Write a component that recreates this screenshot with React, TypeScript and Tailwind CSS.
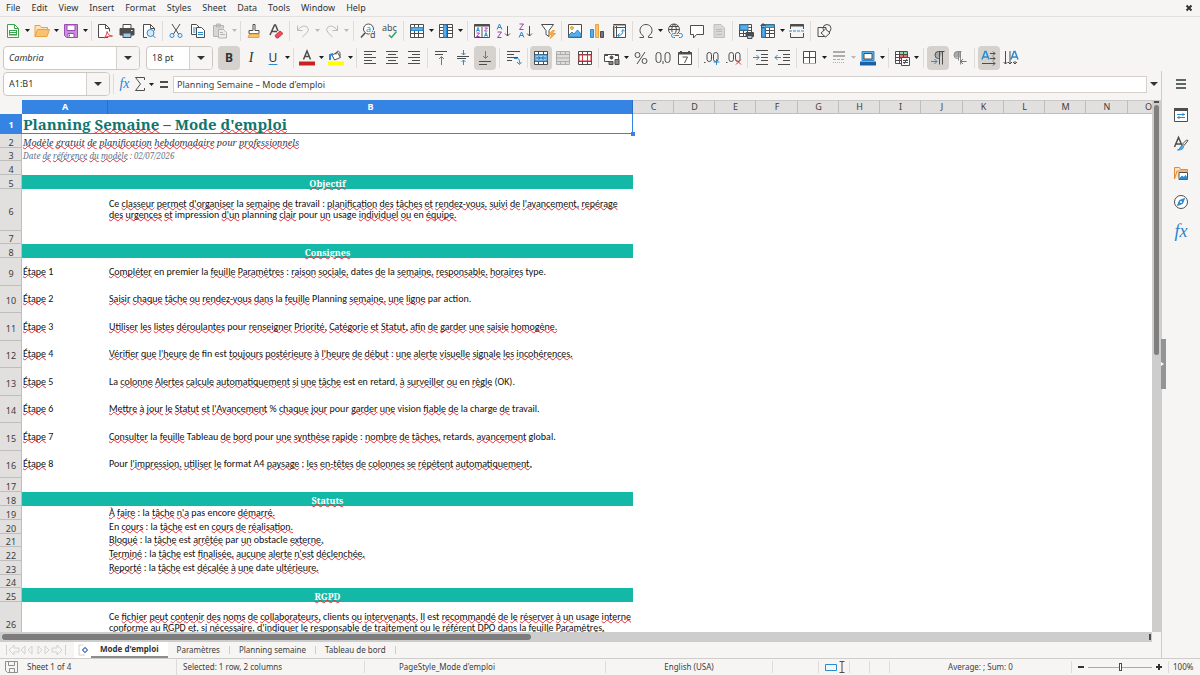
import { Fragment } from "react";
import type { ReactNode } from "react";
import clsx from "clsx";

const INK = "#4d4d4d";
const BLUE = "#2a8bd0";
const RED = "#d9363e";
const ORANGE = "#e8a33d";

const grid = (x: number, y: number, w: number, h: number) =>
  `M${x} ${y}h${w}v${h}h-${w}z M${x} ${y + 3}h${w} M${x} ${y + 6}h${w} M${x} ${y + 9}h${w} M${x + 4} ${y}v${h} M${x + 8} ${y}v${h}`;

const icons: Record<string, ReactNode> = {
  new: (
    <>
      <path d="M2.500 1.500h7l4 4v9h-11z" fill="#fff" stroke="#3fa34d" />
      <path d="M9.500 1.500v4h4" stroke="#3fa34d" />
      <path d="M4 7h8v5.500h-8z" fill="#3fa34d" stroke="none" />
      <path d="M5 8.500h6M5 10.500h6" stroke="#fff" />
    </>
  ),
  open: (
    <>
      <path d="M1 13.500v-11h5l1.500 2h6v3" fill="#fbe3bd" stroke={ORANGE} />
      <path d="M1 13.500l2.500-7h12l-2.500 7z" fill="#f9c270" stroke={ORANGE} />
    </>
  ),
  save: (
    <>
      <path d="M1.500 1.500h13v13h-11l-2-2z" fill="#c98fd8" stroke="#9b4db5" />
      <path d="M4 2h8v5.500h-8z" fill="#fff" stroke="#9b4db5" />
      <path d="M5 10.500h6v4h-6z" fill="#fff" stroke="#9b4db5" />
      <path d="M6.500 11.500v2" stroke="#9b4db5" />
    </>
  ),
  pdf: (
    <>
      <path d="M11 14.500h-9.500v-13h7l4 4v3" fill="#fff" stroke={INK} />
      <path d="M8.500 1.500v4h4" stroke={INK} />
      <path d="M7 15c2-2 3-4 3-6.500c1.500 4 3 4.500 5.500 4.500c-3 0-6 .5-8.500 2z" stroke={RED} />
    </>
  ),
  print: (
    <>
      <path d="M4 6v-4.500h8v4.500" fill="#fff" stroke={INK} />
      <path d="M1 5.500h14v6.500h-14z" fill={INK} stroke={INK} />
      <path d="M4 10h8v4.500h-8z" fill="#9cc9ee" stroke={INK} />
      <path d="M12 7.500h1.500" stroke="#fff" />
    </>
  ),
  preview: (
    <>
      <path d="M6 14.500h-3.500v-13h7l4 4v2" fill="#fff" stroke={INK} />
      <path d="M9.500 1.500v4h4" stroke={INK} />
      <circle cx="9.500" cy="10" r="3.500" fill="#d4eafa" stroke={BLUE} />
      <path d="M12 12.500l2.500 2.500" stroke={BLUE} />
    </>
  ),
  cut: (
    <>
      <path d="M4 1l6.500 10M12 1l-6.500 10" stroke={INK} />
      <circle cx="4" cy="12.500" r="2" stroke={BLUE} />
      <circle cx="12" cy="12.500" r="2" stroke={BLUE} />
    </>
  ),
  copy: (
    <>
      <path d="M1.500 1.500h5l3 3v7h-8z" fill="#fff" stroke={INK} />
      <path d="M6.500 4.500h5l3 3v7h-8z" fill="#fff" stroke={INK} />
      <path d="M8 9.500h5M8 11.500h5M3 5h3M3 7h2.500M3 9h2.500" stroke={BLUE} />
    </>
  ),
  paste: (
    <>
      <path d="M6 13.500h-4.500v-11h10v3M4.500 1h4v3h-4z" fill="#d6d6d4" stroke="#b4b4b2" />
      <path d="M6.500 6.500h5l3 3v5.500h-8z" fill="#ececea" stroke="#b4b4b2" />
      <path d="M8 9.500h3M8 11.500h5" stroke="#b4b4b2" />
    </>
  ),
  brush: (
    <>
      <path d="M7 1.500h2v6h4v3h-10v-3h4z" fill="#fff" stroke={INK} />
      <path d="M3.500 11h9.500v3.500h-11z" fill="#f9c270" stroke={ORANGE} />
    </>
  ),
  clear: (
    <>
      <path d="M2 12l4.500-10h1l2.500 6M4 8.500h5" stroke={INK} strokeWidth="1.500" />
      <path d="M7 12.500l5-4.500l3 2.500l-5 4.500h-1.500z" fill="#e8505b" stroke={RED} />
    </>
  ),
  undo: <path d="M2.500 2.500v5h5M3 7c2.500-3.500 6-5 9-3c2.500 2 1.500 5-4.500 10" stroke="#b9b9b7" />,
  redo: <path d="M13.500 2.500v5h-5M13 7c-2.500-3.500-6-5-9-3c-2.500 2-1.500 5 4.500 10" stroke="#b9b9b7" />,
  find: (
    <>
      <circle cx="8.500" cy="6" r="5" fill="#fff" stroke={INK} />
      <path d="M5 10l-4 4.500" stroke={INK} strokeWidth="1.500" />
      <text x="6" y="9" fontSize="9" fill={BLUE} stroke="none" fontFamily="Noto Sans">a</text>
      <text x="10" y="15" fontSize="9" fill={INK} stroke="#f6f5f4" strokeWidth="2" paintOrder="stroke" fontFamily="Noto Sans">d</text>
    </>
  ),
  spell: (
    <>
      <text x="0" y="8" fontSize="9" fill={INK} stroke="none" fontFamily="Noto Sans">abc</text>
      <path d="M7 12l2.500 2.500l5-6" stroke="#2fa36b" strokeWidth="1.500" />
    </>
  ),
  rows: (
    <>
      <path d={grid(1.5, 1.5, 13, 13)} fill="#fff" stroke={INK} />
      <path d="M2 4.500h12v3h-12z" fill="#5aaee6" stroke={BLUE} />
    </>
  ),
  cols: (
    <>
      <path d={grid(1.5, 1.5, 13, 13)} fill="#fff" stroke={INK} />
      <path d="M5.500 2h3v12h-3z" fill="#5aaee6" stroke={BLUE} />
    </>
  ),
  sort: (
    <>
      <path d="M.5 1.500h15v13h-15zM8 4v10" fill="#fff" stroke={INK} />
      <path d="M0 2.500h16" stroke={INK} strokeWidth="2" />
      <path d="M2.500 8.500l1.500-4l1.500 4M3 7.500h2M10.500 13.500l1.500-4l1.500 4M11 12.500h2" stroke={BLUE} />
      <path d="M2.500 10h3l-3 3.500h3M10.500 5h3l-3 3h3" stroke="#a040b8" />
    </>
  ),
  asc: (
    <>
      <path d="M1 6.500l2.500-5.500l2.500 5.500M2 4.500h3" stroke={BLUE} />
      <path d="M1.500 9h4l-4 5.500h4" stroke="#a040b8" />
      <path d="M11.500 3v10M9 10.500l2.500 2.500l2.500-2.500" stroke={INK} />
    </>
  ),
  desc: (
    <>
      <path d="M1.500 1h4l-4 5.500h4" stroke="#a040b8" />
      <path d="M1 14.500l2.500-5.500l2.500 5.500M2 12.500h3" stroke={BLUE} />
      <path d="M11.500 3v10M9 10.500l2.500 2.500l2.500-2.500" stroke={INK} />
    </>
  ),
  filter: (
    <>
      <path d="M1.500 1.500h12l-4.500 6v6l-3-2v-4z" fill="#fff" stroke={INK} />
      <path d="M12.500 7.500l-3.500 4h3l-2 4l5.500-5h-3l2-3z" fill="#f9b04d" stroke={ORANGE} />
    </>
  ),
  image: (
    <>
      <path d="M1.500 1.500h13v13h-13z" fill="#fff" stroke={INK} />
      <circle cx="5" cy="5" r="1.500" fill="#f9c270" stroke={ORANGE} />
      <path d="M2 14v-2l3-3l2 2l3.500-4l3.500 4v3z" fill="#5aaee6" stroke={BLUE} />
    </>
  ),
  chart: (
    <>
      <path d="M1.500 6.500h3v8h-3z" fill="#5aaee6" stroke={BLUE} />
      <path d="M6.500 1.500h3v13h-3z" fill="#f9c270" stroke={ORANGE} />
      <path d="M11.500 8.500h3v6h-3z" fill="#777" stroke={INK} />
    </>
  ),
  pivot: (
    <>
      <path d="M2.500 1.500h12v13h-12zM2.500 4.500h12M5.500 1.500v13" fill="#fff" stroke={INK} />
      <path d="M2 2.500h12M3.500 2v12" stroke="#b0b0ae" />
      <path d="M7 12.500c3.500 0 5-2 5-5.500M10.500 8.500l1.500-2l2 2M8.500 10.500l-2 2l2 1.500" stroke={BLUE} />
    </>
  ),
  omega: <path d="M1.500 14.500h4v-1.500c-2.500-1.500-3.500-3.500-3.500-5.500c0-3.500 2.500-6 6-6s6 2.500 6 6c0 2-1 4-3.500 5.500v1.500h4" stroke={INK} />,
  link: (
    <>
      <circle cx="7" cy="6.500" r="5.500" stroke={INK} />
      <path d="M1.500 6.500h11M7 1c-3 3-3 8 0 11M7 1c3 3 3 8 0 11M2.500 3.500h9" stroke={INK} />
      <path d="M8 10.500h-1.500a2 2 0 0 0 0 4h1.500M12 10.500h1.500a2 2 0 0 1 0 4h-1.500M8 12.500h4" stroke="#f6f5f4" strokeWidth="3" />
      <path d="M8 10.500h-1.500a2 2 0 0 0 0 4h1.500M12 10.500h1.500a2 2 0 0 1 0 4h-1.500M8 12.500h4" stroke={BLUE} />
    </>
  ),
  comment: <path d="M1.500 2.500h13v9h-7l-3 3.500v-3.500h-3z" fill="#fff" stroke={INK} />,
  headers: (
    <>
      <path d="M3 1.500h7l3.500 3.500v9.500h-10.500z" fill="#d8d8d6" stroke="#c0c0be" />
      <path d="M5 6.500h6M5 8.500h6M5 11.500h6" stroke="#bbb" />
    </>
  ),
  printArea: (
    <>
      <path d={grid(1.5, 1.5, 12, 12)} fill="#fff" stroke={INK} />
      <path d="M2 2h8v5h-8z" fill="#5aaee6" stroke={BLUE} />
      <path d="M8 9.500h7.500v4h-7.500z" fill={INK} stroke={INK} />
      <path d="M9.500 12.500h4.500v3h-4.500z" fill="#9cc9ee" stroke={INK} />
    </>
  ),
  freeze: (
    <>
      <path d={grid(1.5, 1.5, 13, 13)} fill="#fff" stroke={INK} />
      <path d="M2 5h3v9h-3zM5 2h9v2.500h-9z" fill="#5aaee6" stroke={BLUE} />
      <path d="M3 0v5M.5 2.500h5" stroke="#1565a8" />
    </>
  ),
  split: (
    <>
      <path d="M1.500 6v-4.500h13v4.500M1.500 10v4.500h13v-4.500" stroke={INK} />
      <path d="M1 2.500h14" stroke={INK} strokeWidth="2" />
      <path d="M0 8h16" stroke={BLUE} strokeDasharray="3 1" />
    </>
  ),
  shapes: (
    <>
      <path d="M2 4.500h8v9h-8z" stroke={INK} />
      <circle cx="11" cy="5.500" r="4" stroke={INK} />
      <path d="M9.500 6l4.500 4l-4.500 4l-4.500-4z" fill="#f6f5f4" stroke={INK} />
    </>
  ),
  fontColor: (
    <>
      <path d="M4.500 9.500l3.500-8.500l3.500 8.500M5.500 6.500h5" stroke={INK} strokeWidth="1.500" />
      <path d="M0 11.500h16v4h-16z" fill="#c9211e" stroke="none" />
    </>
  ),
  highlight: (
    <>
      <path d="M4 5l5.500-2.500l3 5l-6 2.500z" fill="#fff" stroke={INK} />
      <path d="M8 4.500c-1-3 3.500-5 4-1v3" stroke={INK} />
      <path d="M5 4l-3 1v5" stroke={BLUE} strokeWidth="2" />
      <path d="M0 11.500h16v4h-16z" fill="#ffff00" stroke="none" />
    </>
  ),
  left: <path d="M2 1.500h12M2 4.500h8M2 7.500h12M2 10.500h8M2 13.500h12" stroke={INK} />,
  center: <path d="M2 1.500h12M4 4.500h8M2 7.500h12M4 10.500h8M2 13.500h12" stroke={INK} />,
  right: <path d="M2 1.500h12M6 4.500h8M2 7.500h12M6 10.500h8M2 13.500h12" stroke={INK} />,
  top: (
    <>
      <path d="M2 1.500h12M2 4.500h8" stroke={INK} />
      <path d="M8.500 15v-8M6 9l2.500-2.500l2.500 2.500" stroke={BLUE} />
    </>
  ),
  middle: (
    <>
      <path d="M2 6.500h12M2 8.500h9" stroke={INK} />
      <path d="M8.500 0v5M6.500 3l2 2l2-2M8.500 15v-5M6.500 12l2-2l2 2" stroke={BLUE} />
    </>
  ),
  bottom: (
    <>
      <path d="M2 11.500h12M2 14.500h8" stroke={INK} />
      <path d="M8.500 1v7M6 6l2.500 2.500l2.500-2.500" stroke={BLUE} />
    </>
  ),
  wrap: (
    <>
      <path d="M1 1.500h13M1 4.500h7M1 7.500h11M1 10.500h5" stroke={INK} />
      <path d="M8 8.500h3c2 0 2.500 1 2.500 5M11 12l2.500 2.500l2-2.500" stroke={BLUE} />
    </>
  ),
  mergeCenter: (
    <>
      <path d="M1.500 1.500h13v13h-13zM1.500 4.500h13M1.500 11.500h13M5.500 1.500v3M10.500 1.500v3M5.500 11.500v3M10.500 11.500v3" fill="#fff" stroke={INK} />
      <path d="M2 5h12v6h-12z" fill="#9cd0f2" stroke={BLUE} />
      <path d="M3 8h4M9 8h4M5.500 6.500l2 1.500l-2 1.500M10.500 6.500l-2 1.500l2 1.500" stroke="#1565a8" />
    </>
  ),
  merge: <path d="M1.500 1.500h13v13h-13zM1.500 4.500h13M1.500 8h13M1.500 11.500h13M5.500 1.500v3M10.500 1.500v3M5.500 11.500v3M10.500 11.500v3" fill="#dcdcda" stroke="#acacaa" />,
  unmerge: (
    <>
      <path d="M1.500 1.500h13v13h-13zM1.500 4.500h13M1.500 11.500h13M5.500 1.500v13M10.500 1.500v13" fill="#fff" stroke={INK} />
      <path d="M2 5h12v6h-12zM5.500 5v6M10.500 5v6" stroke={RED} />
    </>
  ),
  currency: (
    <>
      <path d="M6 11.500h-5.500v-7h14v5" fill="#fff" stroke={INK} />
      <path d="M1 5.500h3M11 5.500h3" stroke={INK} />
      <circle cx="7.500" cy="7.500" r="1.500" fill={INK} stroke={INK} />
      <path d="M5 11.500h4v3h-4zM11 9.500h4v5h-4z" fill="#8a8a88" stroke={INK} />
    </>
  ),
  percent: (
    <>
      <circle cx="4.500" cy="5" r="2.500" stroke={INK} />
      <circle cx="11.500" cy="11" r="2.500" stroke={INK} />
      <path d="M12 2l-8 12" stroke={INK} />
    </>
  ),
  number: (
    <>
      <rect x="1" y="2.500" width="5" height="10" rx="2.500" stroke={INK} />
      <rect x="10" y="2.500" width="5" height="10" rx="2.500" stroke={INK} />
      <path d="M8 11v3" stroke={INK} />
    </>
  ),
  date: (
    <>
      <path d="M1.500 2.500h13v12h-13z" fill="#fff" stroke={INK} />
      <path d="M1 3.500h14" stroke={INK} strokeWidth="2" />
      <path d="M4 1v2M12 1v2" stroke={INK} strokeWidth="2" />
      <path d="M5.500 7h5l-3 6" stroke={INK} />
    </>
  ),
  addDecimal: (
    <>
      <path d="M0 12.500h1.500" stroke={INK} />
      <rect x="3" y="2.500" width="4.500" height="9" rx="2.200" stroke={INK} />
      <rect x="9.500" y="2.500" width="4.500" height="9" rx="2.200" stroke={INK} />
      <path d="M12.500 9v6M9.500 12h6" stroke={BLUE} />
    </>
  ),
  delDecimal: (
    <>
      <path d="M0 12.500h1.500" stroke={INK} />
      <rect x="3" y="2.500" width="4.500" height="9" rx="2.200" stroke={INK} />
      <rect x="9.500" y="2.500" width="4.500" height="9" rx="2.200" stroke={INK} />
      <path d="M10 9.500l5 5M15 9.500l-5 5" stroke={RED} />
    </>
  ),
  indent: (
    <>
      <path d="M3 .5h12M8 4.500h7M8 7.500h7M8 10.500h7M3 14.500h12" stroke={INK} />
      <path d="M0 7.500h6M3.500 5l2.500 2.500l-2.500 2.500" stroke={BLUE} />
    </>
  ),
  outdent: (
    <>
      <path d="M3 .5h12M8 4.500h7M8 7.500h7M8 10.500h7M3 14.500h12" stroke={INK} />
      <path d="M0 7.500h6M2.500 5l-2.500 2.500l2.500 2.500" stroke={BLUE} />
    </>
  ),
  borders: (
    <>
      <path d="M1.500 1.500h12v12h-12zM7.500 1.500v12M1.500 7.500h12" fill="#fff" stroke={INK} />
      <path d="M1 13.500h13" stroke={ORANGE} />
    </>
  ),
  lineStyle: (
    <>
      <path d="M2 2h12M2 6h12" stroke="#acacaa" strokeWidth="2" />
      <path d="M2 9.500h12" stroke="#acacaa" strokeDasharray="3 1" />
      <path d="M2 12.500h12" stroke="#acacaa" strokeDasharray="1 1" />
    </>
  ),
  borderColor: (
    <>
      <path d="M2 1.500h12v9h-12z" fill="#5aaee6" stroke={BLUE} />
      <path d="M4 3.500h8v5.500h-8z" fill="#fff" stroke={INK} />
      <path d="M0 11.500h16v4h-16z" fill="#1b5fa8" stroke="none" />
    </>
  ),
  conditional: (
    <>
      <path d="M1.500 1.500h12v12h-12z" fill="#fff" stroke={INK} />
      <path d="M5 2h8v3h-8z" fill="#8fd6a0" stroke="none" />
      <path d="M5 5h8v4h-8z" fill="#e8707a" stroke="none" />
      <path d="M1.500 4.500h12M1.500 7.500h12M1.500 10.500h12M5.500 1.500v12M9.500 1.500v12" stroke={INK} />
      <path d="M7.500 7.500h8v8h-8z" fill="#fff" stroke={INK} />
      <path d="M9 10.500h5M9 12.500h5M13 9l-3 5" stroke={INK} />
    </>
  ),
  ltr: (
    <>
      <path d="M13.500 1.500h-5a3 3 0 0 0 0 6h1z" fill="#aaa" stroke="none" />
      <path d="M14.500 1.500h-6a3.500 3.500 0 0 0 0 7h1M9.500 1.500v13M12.500 1.500v13" stroke={INK} />
      <path d="M1 11.500h6M4.500 9l2.500 2.500l-2.500 2.500" stroke={BLUE} />
    </>
  ),
  rtl: (
    <>
      <path d="M9 1.500h-4a3 3 0 0 0 0 6h4z" fill="#aaa" stroke="none" />
      <path d="M9.500 1.500h-4a3.500 3.500 0 0 0 0 7h1M6.500 1.500v9M8.500 1.500v13" stroke="#8a8a88" />
      <path d="M8.500 11.500h6M11 9l-2.500 2.500l2.500 2.500" stroke={BLUE} />
    </>
  ),
  horizontalText: (
    <>
      <path d="M1 9.500l3-8h1l3 8M2 7h5" stroke={BLUE} strokeWidth="1.500" />
      <path d="M9 3.500h5M9 8.500h5M1 13.500h13M12 1.500l2 2l-2 2M12 6.500l2 2l-2 2M12 11.500l2 2l-2 2" stroke={INK} />
    </>
  ),
  verticalText: (
    <>
      <path d="M8 9.500l3-8h1l3 8M9 7h5" stroke={BLUE} strokeWidth="1.500" />
      <path d="M2.500 1v13M7 1v13M12 11v3M.5 12l2 2l2-2M5 12l2 2l2-2M10 12l2 2l2-2" stroke={INK} />
    </>
  ),
  sigma: <path d="M12.500 4v-2.500h-9l5 6.500l-5 6.500h9v-2.500" stroke={INK} />,
  menu: <path d="M3 4h10M3 8h10M3 12h10" stroke="#2e3436" strokeWidth="1.500" />,
  properties: (
    <>
      <path d="M1.500 1.500h13v13h-13z" fill="#fff" stroke={INK} />
      <path d="M1 2.500h14" stroke={INK} strokeWidth="3" />
      <path d="M4 7.500h8M4 10.500h8M10 6v3M6 9v3" stroke={BLUE} />
    </>
  ),
  styles: (
    <>
      <path d="M1.500 11l4-9.500l3.500 8M3 8h5" stroke={INK} strokeWidth="1.500" />
      <path d="M15 4.500l-4 5l-1.500-1.500l4-4z" fill="#fff" stroke={INK} />
      <path d="M4.500 14c3 0 1.500-3.500 5-4.500c2 1.500 1 4.500-5 4.500z" fill="#5aaee6" stroke={BLUE} />
    </>
  ),
  gallery: (
    <>
      <path d="M1.500 14v-11.500h5l1 2h7v2" fill="#fbe3bd" stroke="#e08a3a" />
      <path d="M1.500 14l2.500-8h11" stroke="#e08a3a" />
      <path d="M6 7.500h8.500v7h-8.500z" fill="#fff" stroke={INK} />
      <path d="M6.500 14l2.500-3l2 1.500l1.500-2l2 3.500z" fill={BLUE} stroke={BLUE} />
    </>
  ),
  navigator: (
    <>
      <circle cx="8" cy="8" r="6.500" fill="#fff" stroke={INK} />
      <path d="M11.500 4.500l-2 5l-5 2l2-5z" fill={BLUE} stroke={BLUE} />
      <circle cx="8" cy="8" r="1" fill="#fff" stroke="none" />
    </>
  ),
  floppy: <path d="M1.500 2.500h12v11h-10l-2-2zM4.500 2.500v4h6v-4M5.500 13.500v-4h5v4" stroke="#8e8e8c" />,
};

const Icon = ({ name }: { name: string }) => (
  <svg viewBox="0 0 16 16" fill="none" className="size-4 shrink-0 overflow-visible">
    {icons[name]}
  </svg>
);

const Fx = ({ className }: { className: string }) => (
  <span className={clsx("block font-['Liberation_Serif',serif] leading-4 text-[#2a84d0] italic", className)}>fx</span>
);

const Caret = ({ disabled, label }: { disabled?: boolean; label: string }) => (
  <button aria-label={`${label} options`} disabled={disabled} className="flex w-[7px] shrink-0 items-center justify-center">
    <svg viewBox="0 0 5 3" className={clsx("h-[3px] w-[5px] shrink-0", disabled ? "fill-[#b9b9b7]" : "fill-[#1d1d1d]")}>
      <path d="M0 0h5l-2.500 3z" />
    </svg>
  </button>
);

type Tool = { icon: string; caret?: boolean; off?: boolean; on?: boolean } | "|" | "||";

const standardTools: Tool[] = [
  { icon: "new", caret: true },
  { icon: "open", caret: true },
  { icon: "save", caret: true },
  "|",
  { icon: "pdf" },
  { icon: "print" },
  { icon: "preview" },
  "|",
  { icon: "cut" },
  { icon: "copy" },
  { icon: "paste", caret: true, off: true },
  "|",
  { icon: "brush" },
  { icon: "clear" },
  "|",
  { icon: "undo", caret: true, off: true },
  { icon: "redo", caret: true, off: true },
  "||",
  { icon: "find" },
  { icon: "spell" },
  "|",
  { icon: "rows", caret: true },
  { icon: "cols", caret: true },
  "||",
  { icon: "sort" },
  { icon: "asc" },
  { icon: "desc" },
  { icon: "filter" },
  "|",
  { icon: "image" },
  { icon: "chart" },
  { icon: "pivot" },
  "|",
  { icon: "omega", caret: true },
  { icon: "link" },
  { icon: "comment" },
  { icon: "headers", off: true },
  "|",
  { icon: "printArea" },
  { icon: "freeze", caret: true },
  { icon: "split" },
  "|",
  { icon: "shapes" },
];

const formatTools: Tool[] = [
  "|",
  { icon: "fontColor", caret: true },
  { icon: "highlight", caret: true },
  "|",
  { icon: "left" },
  { icon: "center" },
  { icon: "right" },
  "|",
  { icon: "top" },
  { icon: "middle" },
  { icon: "bottom", on: true },
  "||",
  { icon: "wrap" },
  "|",
  { icon: "mergeCenter", on: true },
  { icon: "merge", off: true },
  { icon: "unmerge" },
  "|",
  { icon: "currency", caret: true },
  { icon: "percent" },
  { icon: "number" },
  { icon: "date" },
  "|",
  { icon: "addDecimal" },
  { icon: "delDecimal" },
  "|",
  { icon: "indent" },
  { icon: "outdent" },
  "|",
  { icon: "borders", caret: true },
  { icon: "lineStyle", caret: true, off: true },
  { icon: "borderColor", caret: true },
  "|",
  { icon: "conditional", caret: true },
  "||",
  { icon: "ltr", on: true },
  { icon: "rtl" },
  "||",
  { icon: "horizontalText", on: true },
  { icon: "verticalText" },
];

const ToolButtons = ({ tools }: { tools: Tool[] }) => (
  <>
    {tools.map((tool, i) =>
      typeof tool === "string" ? (
        <span key={i} className={clsx("h-5 w-px shrink-0 bg-[#dedcda]", tool === "||" ? "mx-[3px]" : "mx-0.5")} />
      ) : (
        <Fragment key={i}>
          <button
            aria-label={tool.icon}
            disabled={tool.off}
            className={clsx("flex h-6 w-[22px] shrink-0 items-center justify-center rounded-sm", tool.on && "bg-[#d5d1cd]")}
          >
            <Icon name={tool.icon} />
          </button>
          {tool.caret && <Caret disabled={tool.off} label={tool.icon} />}
        </Fragment>
      )
    )}
  </>
);

const ComboBox = ({ label, value, className, italic }: { label: string; value: string; className: string; italic?: boolean }) => (
  <div className={clsx("flex h-6 shrink-0 overflow-hidden rounded border border-[#cdc7c2] bg-white", className)}>
    <input aria-label={label} defaultValue={value} className={clsx("min-w-0 flex-1 px-[5px] text-[9px] outline-none", italic && "italic")} />
    <button aria-label={`Open ${label}`} className="flex w-[23px] items-center justify-center border-l border-[#d5d0cc] bg-[#f6f5f4]">
      <svg viewBox="0 0 8 4" className="h-1 w-2 fill-[#2e3436]">
        <path d="M0 0h8l-4 4z" />
      </svg>
    </button>
  </div>
);

// words the English dictionary accepts, everything else gets the red wave
const knownWords = new Set(
  "planning mode pour date ce la travail impression usage en premier dates type par action fin est retard retards ok vision charge tableau format a4 pas encore obstacle clients global".split(" ")
);

const Spell = ({ children }: { children: string }) => (
  <>
    {children.split(" ").map((word, i) => {
      const bare = word.replace(/[.,()]/g, "").toLowerCase();
      const ok = !/[a-zà-ÿ]/.test(bare) || knownWords.has(bare);
      return (
        <Fragment key={i}>
          {i > 0 && " "}
          {ok ? (
            word
          ) : (
            <span className="underline decoration-[#e0303a] decoration-wavy decoration-1 -underline-offset-1 [text-decoration-skip-ink:none]">{word}</span>
          )}
        </Fragment>
      );
    })}
  </>
);

type Row = { h: string; kind?: "title" | "subtitle" | "note" | "banner"; a?: string; b?: string };

const rows: Row[] = [
  { h: "h-5", kind: "title", a: "Planning Semaine – Mode d'emploi" },
  { h: "h-3.5", kind: "subtitle", a: "Modèle gratuit de planification hebdomadaire pour professionnels" },
  { h: "h-[13px]", kind: "note", a: "Date de référence du modèle : 02/07/2026" },
  { h: "h-3.5" },
  { h: "h-3.5", kind: "banner", a: "Objectif" },
  {
    h: "h-[42px]",
    b: "Ce classeur permet d'organiser la semaine de travail : planification des tâches et rendez-vous, suivi de l'avancement, repérage\ndes urgences et impression d'un planning clair pour un usage individuel ou en équipe.",
  },
  { h: "h-[13px]" },
  { h: "h-3.5", kind: "banner", a: "Consignes" },
  { h: "h-7", a: "Étape 1", b: "Compléter en premier la feuille Paramètres : raison sociale, dates de la semaine, responsable, horaires type." },
  { h: "h-[27px]", a: "Étape 2", b: "Saisir chaque tâche ou rendez-vous dans la feuille Planning semaine, une ligne par action." },
  { h: "h-7", a: "Étape 3", b: "Utiliser les listes déroulantes pour renseigner Priorité, Catégorie et Statut, afin de garder une saisie homogène." },
  { h: "h-[27px]", a: "Étape 4", b: "Vérifier que l'heure de fin est toujours postérieure à l'heure de début : une alerte visuelle signale les incohérences." },
  { h: "h-7", a: "Étape 5", b: "La colonne Alertes calcule automatiquement si une tâche est en retard, à surveiller ou en règle (OK)." },
  { h: "h-[27px]", a: "Étape 6", b: "Mettre à jour le Statut et l'Avancement % chaque jour pour garder une vision fiable de la charge de travail." },
  { h: "h-7", a: "Étape 7", b: "Consulter la feuille Tableau de bord pour une synthèse rapide : nombre de tâches, retards, avancement global." },
  { h: "h-[27px]", a: "Étape 8", b: "Pour l'impression, utiliser le format A4 paysage ; les en-têtes de colonnes se répètent automatiquement." },
  { h: "h-3.5" },
  { h: "h-3.5", kind: "banner", a: "Statuts" },
  { h: "h-3.5", b: "À faire : la tâche n'a pas encore démarré." },
  { h: "h-3.5", b: "En cours : la tâche est en cours de réalisation." },
  { h: "h-[13px]", b: "Bloqué : la tâche est arrêtée par un obstacle externe." },
  { h: "h-3.5", b: "Terminé : la tâche est finalisée, aucune alerte n'est déclenchée." },
  { h: "h-3.5", b: "Reporté : la tâche est décalée à une date ultérieure." },
  { h: "h-[13px]" },
  { h: "h-3.5", kind: "banner", a: "RGPD" },
  {
    h: "h-[42px]",
    b: "Ce fichier peut contenir des noms de collaborateurs, clients ou intervenants. Il est recommandé de le réserver à un usage interne\nconforme au RGPD et, si nécessaire, d'indiquer le responsable de traitement ou le référent DPO dans la feuille Paramètres.",
  },
];

const columns = "CDEFGHIJKLMNO".split("");

const mergedStyle = {
  title: "font-['Noto_Serif','Droid_Serif','Liberation_Serif',serif] text-[15px] font-bold text-[#0f766e] leading-[19px] pl-px",
  subtitle: "font-['Noto_Serif','Droid_Serif','Liberation_Serif',serif] text-[9px] italic text-[#374151] leading-[11px] pt-0.5 pl-px",
  note: "font-['Noto_Serif','Droid_Serif','Liberation_Serif',serif] text-[8px] italic text-[#6b7280] leading-[11px] pt-0.5 pl-px",
  banner: "font-['Noto_Serif','Droid_Serif','Liberation_Serif',serif] text-[9px] font-bold text-white leading-[11px] pt-0.5 bg-[#14b8a6] text-center",
};

const Sheet = () => (
  <table className="w-[1169px] table-fixed border-collapse text-[9px]">
    <colgroup>
      <col className="w-[22px]" />
      <col className="w-[86px]" />
      <col className="w-[525px]" />
      {columns.map((c) => (
        <col key={c} className={"FJN".includes(c) ? "w-[42px]" : "w-[41px]"} />
      ))}
    </colgroup>
    <thead>
      <tr className="h-3.5">
        <td className="p-0" />
        {["A", "B"].map((c) => (
          <th key={c} className="bg-[#3584e4] p-0 leading-3 font-bold text-white shadow-[inset_-1px_0_#2a6fc4]">
            {c}
          </th>
        ))}
        {columns.map((c) => (
          <th key={c} className="bg-[#e1e0df] p-0 leading-3 font-normal text-[#3d3d3d] shadow-[inset_-1px_-1px_#bfbebd,inset_0_1px_#c9c8c7]">
            {c}
          </th>
        ))}
      </tr>
    </thead>
    <tbody className="bg-white text-[#111]">
      {rows.map((row, i) => (
        <tr key={i} className={row.h}>
          <th
            className={clsx(
              "p-0 text-center leading-[11px]",
              i === 0 ? "bg-[#3584e4] font-bold text-white" : "bg-[#e1e0df] pt-0.5 font-normal text-[#3d3d3d] shadow-[inset_-1px_-1px_#bfbebd]"
            )}
          >
            {i + 1}
          </th>
          {row.kind ? (
            <td
              colSpan={2}
              className={clsx(
                "relative p-0 whitespace-nowrap",
                mergedStyle[row.kind],
                i === 0 && "shadow-[inset_-1px_0_#3584e4,inset_0_-1px_#3584e4]"
              )}
            >
              <Spell>{row.a ?? ""}</Spell>
              {i === 0 && <span className="absolute -right-0.5 -bottom-0.5 size-1 bg-[#3584e4]" />}
            </td>
          ) : (
            <>
              <td className="p-0 pb-0.5 pl-px font-['Carlito','Lato',sans-serif] text-[10px] leading-[11px]">
                {row.a && <Spell>{row.a}</Spell>}
              </td>
              <td className="p-0 pb-0.5 pl-px font-['Carlito','Lato',sans-serif] text-[10px] leading-[11px] whitespace-nowrap">
                {row.b?.split("\n").map((line) => (
                  <div key={line}>
                    <Spell>{line}</Spell>
                  </div>
                ))}
              </td>
            </>
          )}
          <td colSpan={columns.length} className="p-0" />
        </tr>
      ))}
    </tbody>
  </table>
);

const FormulaBar = () => (
  <div className="flex h-[29px] shrink-0 items-center pb-[3px] pl-[3px]">
    <ComboBox label="Name Box" value="A1:B1" className="w-[107px]" />
    <span className="mx-[3px] h-5 w-px bg-[#dedcda]" />
    <button aria-label="Function Wizard" className="w-[15px] text-center">
      <Fx className="text-sm" />
    </button>
    <button aria-label="Select Function" className="flex">
      <Icon name="sigma" />
    </button>
    <Caret label="Select Function" />
    <button aria-label="Formula" className="flex w-[18px] flex-col items-center gap-[3px]">
      <span className="h-0.5 w-2 bg-[#4d4d4d]" />
      <span className="h-0.5 w-2 bg-[#4d4d4d]" />
    </button>
    <input
      aria-label="Input line"
      defaultValue="Planning Semaine – Mode d'emploi"
      className="h-[17px] min-w-0 flex-1 border border-[#d5d0cc] bg-white px-[3px] text-[9px] text-[#3d3d3d] outline-none"
    />
    <button aria-label="Expand Formula Bar" className="flex w-[14px] justify-center">
      <svg viewBox="0 0 8 4" className="h-1 w-2 fill-[#2e3436]">
        <path d="M0 0h8l-4 4z" />
      </svg>
    </button>
  </div>
);

const tabs = ["Mode d'emploi", "Paramètres", "Planning semaine", "Tableau de bord"];

const SheetTabs = () => (
  <div className="flex h-4 shrink-0 items-stretch text-[8px] text-[#3d3d3d]">
    <svg viewBox="0 0 62 12" fill="none" stroke="#d2d1cf" className="my-0.5 ml-[5px] h-3 w-[62px]">
      <path d="M1.500 1v10M9 1l-5 5l5 5v-3h5v-4h-5zM20 2l-4 4l4 4zM27 2l-4 4l4 4zM33 2l4 4l-4 4zM40 2l4 4l-4 4zM52 1l5 5l-5 5v-3h-5v-4h5zM60.500 1v10" />
    </svg>
    <button aria-label="Insert sheet" className="ml-[7px] w-[17px] bg-white pl-1">
      <svg viewBox="0 0 12 12" fill="none" className="size-3">
        <path d="M5 1h-4v10h6" stroke="#d0d0ce" />
        <circle cx="7" cy="6" r="2" fill="#fff" stroke="#2a5fb8" />
        <path d="M7 3v1M7 8v1M4 6h1M9 6h1" stroke="#2a5fb8" />
      </svg>
    </button>
    {tabs.map((tab, i) => (
      <button
        key={tab}
        className={clsx(
          "shrink-0 px-[9px]",
          i === 0 ? "border-b-2 border-[#8b8e8f] bg-white font-bold text-[#2e3436]" : "my-1 border-r border-[#cfcdcb] leading-2"
        )}
      >
        {tab}
      </button>
    ))}
  </div>
);

const Sidebar = () => (
  <nav aria-label="Sidebar" className="relative flex w-[39px] shrink-0 flex-col items-center gap-[13px] border-l border-[#cfcdcb] pt-[5px]">
    <button aria-label="Sidebar settings" className="mb-0.5">
      <Icon name="menu" />
    </button>
    {["properties", "styles", "gallery", "navigator"].map((name) => (
      <button key={name} aria-label={name}>
        <Icon name={name} />
      </button>
    ))}
    <button aria-label="Functions">
      <Fx className="text-lg" />
    </button>
    <button aria-label="Hide sidebar" className="absolute top-[268px] -left-px flex h-[50px] w-[5px] items-center bg-[#929594]">
      <svg viewBox="0 0 3 4" className="h-1 w-[3px] fill-white">
        <path d="M0 0l3 2l-3 2z" />
      </svg>
    </button>
  </nav>
);

const StatusBar = () => (
  <footer className="flex h-[17px] shrink-0 items-center border-t border-[#cfcdcb] text-[8px] text-[#3d3d3d]">
    <div className="flex w-[177px] shrink-0 items-center gap-[7px] border-r border-[#dedcda] pl-1">
      <Icon name="floppy" />
      Sheet 1 of 4
    </div>
    <div className="w-[188px] shrink-0 border-r border-[#dedcda] pl-1.5">Selected: 1 row, 2 columns</div>
    <div className="w-[240px] shrink-0 pl-[34px]">PageStyle_Mode d'emploi</div>
    <div className="w-[168px] shrink-0 border-x border-[#dedcda] text-center">English (USA)</div>
    <div className="w-[45px] shrink-0" />
    <div className="flex w-[32px] shrink-0 items-center gap-1 border-x border-[#dedcda] pl-1.5">
      <svg viewBox="0 0 20 12" fill="none" className="h-3 w-5 shrink-0">
        <path d="M.5 3.500h11v6h-11z" stroke={BLUE} />
        <path d="M14.500 .5h5M17 .5v11M14.500 11.500h5" stroke={INK} />
      </svg>
    </div>
    <div className="h-3 w-5 shrink-0 border-r border-[#dedcda]" />
    <div className="h-3 w-5 shrink-0 border-r border-[#dedcda]" />
    <div className="flex-1 text-center">Average: ; Sum: 0</div>
    <label className="flex items-center gap-1 border-l border-[#dedcda] pl-1.5 text-[#2e3436]">
      <span className="h-[2px] w-1.5 bg-[#2e3436]" />
      <input
        type="range"
        aria-label="Zoom"
        min={0}
        max={100}
        defaultValue={50}
        className="h-3 w-[64px] appearance-none bg-[linear-gradient(#aaa,#aaa)] bg-[length:100%_1px] bg-center bg-no-repeat [&::-webkit-slider-thumb]:h-2 [&::-webkit-slider-thumb]:w-[3px] [&::-webkit-slider-thumb]:appearance-none [&::-webkit-slider-thumb]:border [&::-webkit-slider-thumb]:border-[#4d4d4d] [&::-webkit-slider-thumb]:bg-white"
      />
      <svg viewBox="0 0 6 6" className="size-1.5 shrink-0 fill-[#2e3436]">
        <path d="M2 0h2v2h2v2h-2v2h-2v-2h-2v-2h2z" />
      </svg>
    </label>
    <div className="ml-1.5 w-8 border-l border-[#dedcda] pl-1">100%</div>
  </footer>
);

export default function App() {
  return (
    <div className="flex h-screen flex-col overflow-hidden bg-[#f6f5f4] font-['Noto_Sans',sans-serif] text-[#2e3436]">
      <header className="flex h-[17px] shrink-0 items-center gap-[11px] border-b border-[#e3e1df] pr-[7px] pl-1.5 text-[9px]">
        {["File", "Edit", "View", "Insert", "Format", "Styles", "Sheet", "Data", "Tools", "Window", "Help"].map((item) => (
          <button key={item}>{item}</button>
        ))}
        <button aria-label="Close document" className="ml-auto">
          <svg viewBox="0 0 8 8" stroke="#2e3436" strokeWidth="2" className="size-2">
            <path d="M1.500 1.500l5 5M6.500 1.500l-5 5" />
          </svg>
        </button>
      </header>
      <div className="flex h-[27px] shrink-0 items-center pl-0.5">
        <ToolButtons tools={standardTools} />
      </div>
      <div className="flex h-[27px] shrink-0 items-center pl-[3px]">
        <ComboBox label="Font Name" value="Cambria" italic className="w-[137px]" />
        <ComboBox label="Font Size" value="18 pt" className="ml-1.5 w-[67px]" />
        <button className="ml-[5px] h-6 w-[22px] shrink-0 rounded-sm bg-[#d5d1cd] text-xs font-bold">B</button>
        <button className="h-6 w-[22px] shrink-0 font-['Liberation_Serif',serif] text-sm italic">I</button>
        <button className="h-6 w-[22px] shrink-0 text-xs underline decoration-[#2a8bd0] underline-offset-2">U</button>
        <Caret label="Underline" />
        <ToolButtons tools={formatTools} />
      </div>
      <div className="flex min-h-0 flex-1">
        <main className="flex min-w-0 flex-1 flex-col">
          <FormulaBar />
          <div className="flex min-h-0 flex-1">
            <div className="min-w-0 flex-1 overflow-hidden bg-[linear-gradient(#f6f5f4_14px,#fff_14px)]">
              <Sheet />
            </div>
            <div className="w-[9px] shrink-0 bg-[#cdcdcd] px-0.5">
              <div className="mt-px h-0.5 bg-[#4d4d4d]" />
              <div className="mt-0.5 h-[47%] rounded-full bg-[#7f7f7f]" />
            </div>
          </div>
          <div className="flex h-2.5 shrink-0">
            <div className="flex min-w-0 flex-1 items-center bg-[#cdcdcd] pr-px pl-0.5">
              <div className="h-1.5 w-[46%] rounded-full bg-[#7c7c7c]" />
              <div className="ml-auto h-1.5 w-0.5 bg-[#4d4d4d]" />
            </div>
            <div className="w-[9px] shrink-0" />
          </div>
          <SheetTabs />
        </main>
        <Sidebar />
      </div>
      <StatusBar />
    </div>
  );
}
